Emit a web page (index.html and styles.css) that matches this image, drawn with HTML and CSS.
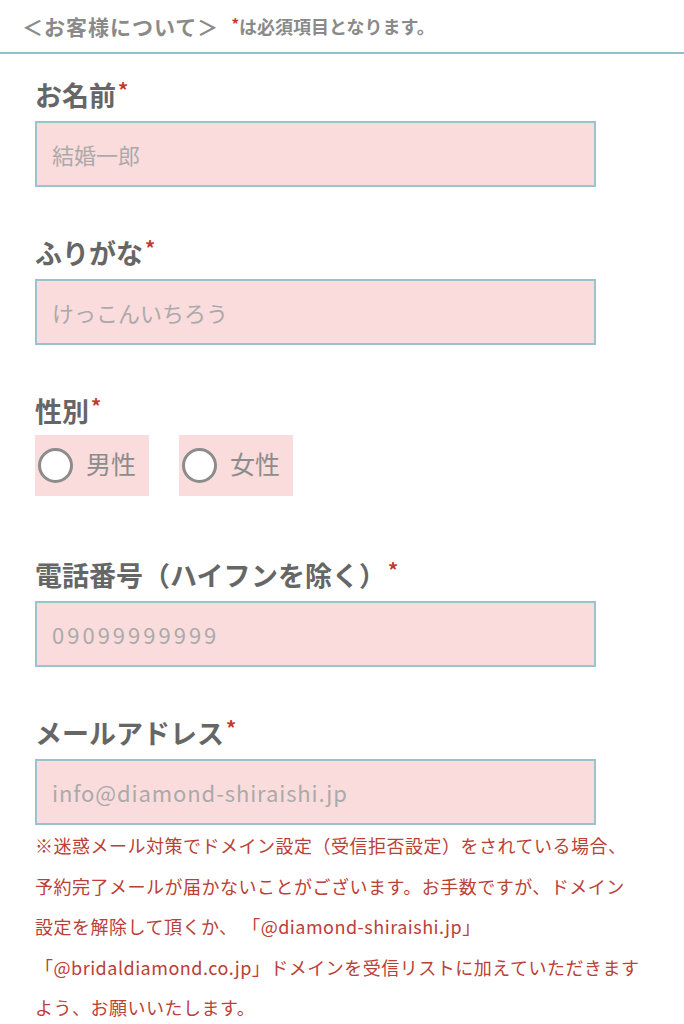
FILE: index.html
```html
<!DOCTYPE html>
<html lang="ja">
<head>
  <meta charset="UTF-8" />
  <meta name="viewport" content="width=device-width, initial-scale=1" />
  <title>お客様について</title>
  <link rel="stylesheet" href="styles.css">
</head>
<body>

  <div class="section-head">
    <span class="section-title">＜お客様について＞</span>
    <span class="section-note"><span class="req">*</span>は必須項目となります。</span>
  </div>

  <form class="form">
    <div class="field">
      <label class="field-label" for="name">お名前<span class="req">*</span></label>
      <input class="text-input" type="text" id="name" placeholder="結婚一郎" />
    </div>

    <div class="field">
      <label class="field-label" for="kana">ふりがな<span class="req">*</span></label>
      <input class="text-input" type="text" id="kana" placeholder="けっこんいちろう" />
    </div>

    <div class="field field-radio">
      <div class="field-label">性別<span class="req">*</span></div>
      <div class="radio-group">
        <label class="radio-option">
          <input type="radio" name="gender" value="male" />
          <span class="radio-mark"></span>
          <span class="radio-text">男性</span>
        </label>
        <label class="radio-option">
          <input type="radio" name="gender" value="female" />
          <span class="radio-mark"></span>
          <span class="radio-text">女性</span>
        </label>
      </div>
    </div>

    <div class="field">
      <label class="field-label" for="tel">電話番号（ハイフンを除く）<span class="req">*</span></label>
      <input class="text-input input-tel" type="tel" id="tel" placeholder="09099999999" />
    </div>

    <div class="field field-last">
      <label class="field-label" for="mail">メールアドレス<span class="req">*</span></label>
      <input class="text-input input-mail" type="email" id="mail" placeholder="info@diamond-shiraishi.jp" />
      <p class="mail-note">※迷惑メール対策でドメイン設定（受信拒否設定）をされている場合、<br>予約完了メールが届かないことがございます。お手数ですが、ドメイン<br>設定を解除して頂くか、 「@diamond-shiraishi.jp」<br>「@bridaldiamond.co.jp」ドメインを受信リストに加えていただきます<br>よう、お願いいたします。</p>
    </div>
  </form>

</body>
</html>
```

FILE: styles.css
```css
* {
  box-sizing: border-box;
}

body {
  margin: 0;
  font-family: "Noto Sans CJK JP", "Noto Sans", sans-serif;
  background-color: #fff;
  color: #666;
}

.req {
  color: #c0392b;
}

.section-head {
  height: 54px;
  padding: 0 22px;
  display: flex;
  align-items: center;
  border-bottom: 2px solid #8ec3cc;
  color: #8a8a8a;
  font-weight: bold;
}

.section-title {
  font-size: 21px;
  letter-spacing: 1px;
  margin-right: 12px;
}

.section-note {
  font-size: 18px;
}

.section-note .req {
  font-size: 15px;
  vertical-align: top;
}

.form {
  padding: 25px 88px 0 35px;
}

.field {
  margin-bottom: 50px;
}

.field-radio {
  margin-bottom: 63px;
}

.field-last {
  margin-bottom: 0;
}

.field-label {
  display: block;
  font-size: 27px;
  font-weight: bold;
  line-height: 32px;
  margin-bottom: 10px;
  color: #666;
}

.field-label .req {
  font-size: 20px;
  vertical-align: top;
  line-height: 22px;
  margin-left: 2px;
}

.text-input {
  display: block;
  width: 100%;
  height: 66px;
  padding: 0 15px;
  border: 2px solid #98c3cf;
  border-radius: 0;
  background-color: #fadcdd;
  font-family: inherit;
  font-size: 22px;
  color: #666;
  outline: none;
}

.text-input::placeholder {
  color: #aaa;
}

.input-tel {
  letter-spacing: 3px;
}

.input-mail {
  letter-spacing: 0.9px;
}

.radio-group {
  display: flex;
  gap: 30px;
}

.radio-option {
  position: relative;
  display: flex;
  align-items: center;
  width: 114px;
  height: 61px;
  margin-top: -2px;
  padding-left: 3px;
  background-color: #fadcdd;
}

.radio-option input {
  position: absolute;
  opacity: 0;
}

.radio-mark {
  width: 35px;
  height: 35px;
  border: 3px solid #8c8c8c;
  border-radius: 50%;
  background-color: #fff;
  flex-shrink: 0;
}

.radio-text {
  margin-left: 13px;
  margin-top: -6px;
  font-size: 25px;
  color: #8c8c8c;
}

.mail-note {
  margin: 0 -60px 0 0;
  font-size: 18px;
  line-height: 40.5px;
  letter-spacing: 0.5px;
  color: #bb4036;
}
```
